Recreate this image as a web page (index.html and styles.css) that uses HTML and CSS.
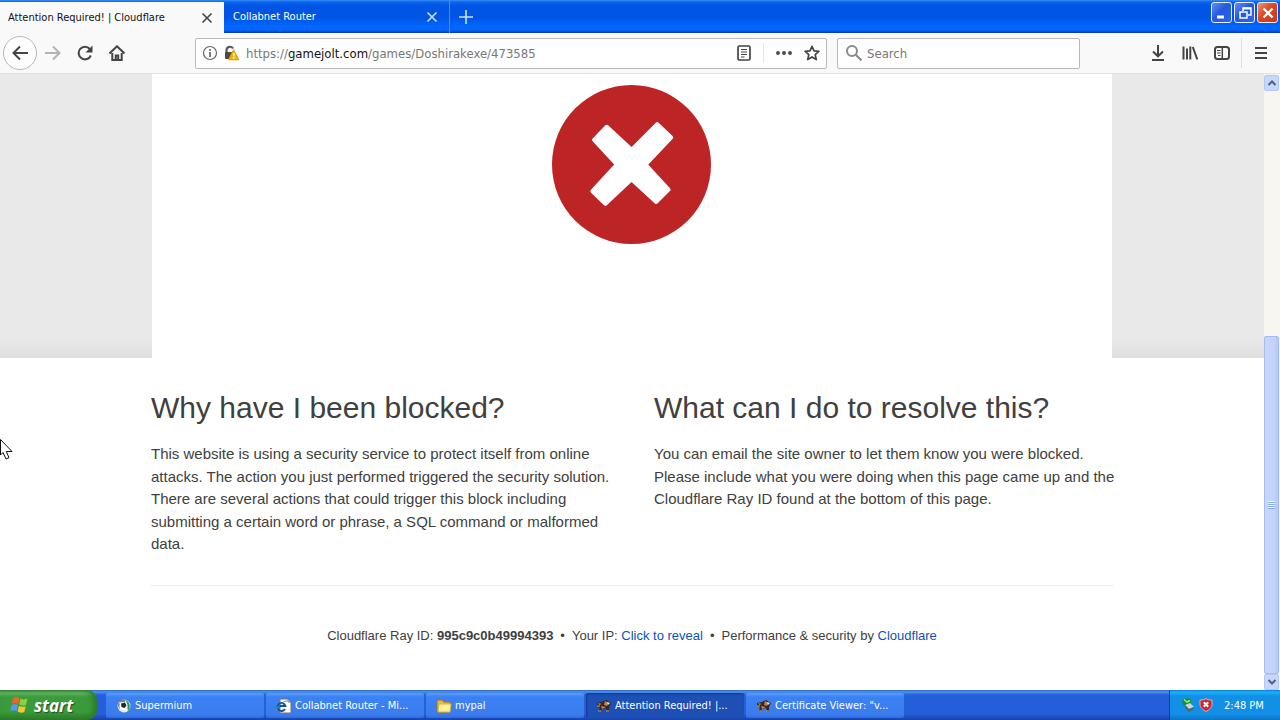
FILE: index.html
```html
<!DOCTYPE html>
<html lang="en">
<head>
<meta charset="utf-8">
<title>Attention Required! | Cloudflare</title>
<link rel="stylesheet" href="styles.css">
</head>
<body>
<header class="tabbar">
  <div class="tab tab-active">
    <button class="tab-title" type="button">Attention Required! | Cloudflare</button>
    <button class="tab-close" type="button" aria-label="Close tab"><svg width="12" height="12" viewBox="0 0 12 12"><path d="M1.500 1.500l9 9M10.500 1.500l-9 9"/></svg></button>
  </div>
  <div class="tab">
    <button class="tab-title" type="button">Collabnet Router</button>
    <button class="tab-close" type="button" aria-label="Close tab"><svg width="12" height="12" viewBox="0 0 12 12"><path d="M1.500 1.500l9 9M10.500 1.500l-9 9"/></svg></button>
  </div>
  <button class="new-tab" type="button" aria-label="New tab"><svg width="14" height="14" viewBox="0 0 14 14"><path d="M7 0v14M0 7h14"/></svg></button>
  <div class="window-controls">
    <button class="win-btn" type="button" aria-label="Minimize"><svg width="18" height="18" viewBox="0 0 18 18"><path d="M4 13h7" stroke-width="3"/></svg></button>
    <button class="win-btn" type="button" aria-label="Restore"><svg width="18" height="18" viewBox="0 0 18 18"><path d="M7 7V4h8v7h-3" stroke-width="1.500"/><path d="M7 4.500h8" stroke-width="2"/><path d="M4 8h7v6H4z" stroke-width="1.500"/></svg></button>
    <button class="win-btn win-close" type="button" aria-label="Close"><svg width="18" height="18" viewBox="0 0 18 18"><path d="M4.500 4.500l9 9M13.500 4.500l-9 9" stroke-width="2.400"/></svg></button>
  </div>
</header>

<nav class="toolbar">
  <div class="nav-buttons">
    <button class="icon-btn back" type="button" aria-label="Back"><svg width="16" height="16" viewBox="0 0 16 16"><path d="M16 8H2M8 1.500L1.500 8 8 14.500"/></svg></button>
    <button class="icon-btn forward" type="button" aria-label="Forward"><svg width="16" height="16" viewBox="0 0 16 16"><path d="M0 8h14M8 1.500L14.500 8 8 14.500"/></svg></button>
    <button class="icon-btn" type="button" aria-label="Reload"><svg width="16" height="16" viewBox="0 0 16 16"><path d="M13.800 10.500A6.300 6.300 0 1 1 12.800 4"/><path d="M15.500 .5v7h-7z" class="solid"/></svg></button>
    <button class="icon-btn" type="button" aria-label="Home"><svg width="16" height="16" viewBox="0 0 16 16"><path d="M.5 8.500L8 1.300l7.500 7.200M3.300 8v7h9.400V8"/><path d="M6.800 15v-4.500h2.400V15"/></svg></button>
  </div>
  <div class="field url-field">
    <svg width="16" height="16" viewBox="0 0 16 16" class="thin"><circle cx="8" cy="8" r="6.500"/><path d="M8 7v5M8 4v1.700" stroke-width="1.700"/></svg>
    <svg width="16" height="16" viewBox="0 0 16 16"><path d="M3.500 8V5a3.500 3.500 0 0 1 6.500-1.500" stroke="#595959" stroke-width="2.200"/><rect x="2" y="7" width="9" height="7" rx="1" fill="#4a4a4a" stroke="none"/><path d="M10.500 5L6 14.500h9.500z" fill="#f5b50f" stroke="#e5a500" stroke-linejoin="round" stroke-width="1.400"/><path d="M10.800 8v3.300M10.800 12.300v1.400" stroke="#fff" stroke-width="1.400"/></svg>
    <div class="url" role="textbox" aria-label="Address" contenteditable="true" spellcheck="false">https://<span class="host">gamejolt.com</span>/games/Doshirakexe/473585</div>
    <button class="field-btn" type="button" aria-label="Reader view"><svg width="16" height="16" viewBox="0 0 16 16"><rect x="2" y="1" width="12" height="14" rx="1.500" stroke-width="1.700"/><path d="M5 4.500h6M5 7h6M5 9.500h6M5 12h3.500" stroke-width="1"/></svg></button>
    <span class="field-sep"></span>
    <button class="field-btn" type="button" aria-label="Page actions"><svg width="16" height="16" viewBox="0 0 16 16"><g fill="#505050" stroke="none"><circle cx="2" cy="8" r="2"/><circle cx="8" cy="8" r="2"/><circle cx="14" cy="8" r="2"/></g></svg></button>
    <button class="field-btn" type="button" aria-label="Bookmark"><svg width="16" height="16" viewBox="0 0 16 16"><path d="M8 1.300l2 4.600 4.900.4-3.700 3.300 1.100 5L8 12l-4.300 2.600 1.100-5L1.100 6.300 6 5.900z" stroke-width="1.700" stroke-linejoin="round"/></svg></button>
  </div>
  <label class="field search-field">
    <svg width="16" height="16" viewBox="0 0 16 16"><g stroke="#8a8a8a"><circle cx="6" cy="6" r="5"/><path d="M9.800 9.800L15.500 15.500"/></g></svg>
    <input class="search" type="text" placeholder="Search" aria-label="Search">
  </label>
  <div class="tools">
    <button class="icon-btn" type="button" aria-label="Downloads"><svg width="16" height="16" viewBox="0 0 16 16"><path d="M8 0v11M3 6.500L8 11.300l5-4.800M2 15h12"/></svg></button>
    <button class="icon-btn" type="button" aria-label="Library"><svg width="16" height="16" viewBox="0 0 16 16"><path d="M1.500 1.500v13M5 3.500v11M8.300 1.500v13M10.800 2L15.300 14.500"/></svg></button>
    <button class="icon-btn" type="button" aria-label="Sidebars"><svg width="16" height="16" viewBox="0 0 16 16"><rect x="1" y="2" width="14" height="12" rx="2.500"/><path d="M8.300 2v12" stroke-width="1.500"/><path d="M3 5.500h3.500M3 8h3.500M4 10.500h2.500" stroke-width="1"/></svg></button>
    <span class="tool-sep"></span>
    <button class="icon-btn menu" type="button" aria-label="Menu"><svg width="16" height="16" viewBox="0 0 16 16"><path d="M2 3h12M2 8h12M2 13h12"/></svg></button>
  </div>
</nav>

<div class="viewport">
  <main class="page">
    <section class="banner">
      <div class="banner-card">
        <svg class="error-icon" viewBox="36 30 476 476" role="img" aria-label="Blocked"><circle cx="274" cy="268" r="238" fill="#bd2426"/><path d="M200 155L274 224 351 147 393 187 316 268 385 343 348 380 274 312 196 386 157 348 230 268 162 194z" fill="#fff" stroke="#fff" stroke-width="12" stroke-linejoin="round"/></svg>
      </div>
    </section>
    <div class="container">
      <div class="columns">
        <section>
          <h2>Why have I been blocked?</h2>
          <p>This website is using a security service to protect itself from online attacks. The action you just performed triggered the security solution. There are several actions that could trigger this block including submitting a certain word or phrase, a SQL command or malformed data.</p>
        </section>
        <section>
          <h2>What can I do to resolve this?</h2>
          <p>You can email the site owner to let them know you were blocked. Please include what you were doing when this page came up and the Cloudflare Ray ID found at the bottom of this page.</p>
        </section>
      </div>
      <footer class="footer">
        <span>Cloudflare Ray ID: <strong>995c9c0b49994393</strong></span><span class="dot">•</span><span>Your IP: <a href="#reveal">Click to reveal</a></span><span class="dot">•</span><span>Performance &amp; security by <a href="#cloudflare">Cloudflare</a></span>
      </footer>
    </div>
  </main>
  <div class="scrollbar">
    <button class="scroll-btn" type="button" aria-label="Scroll up"><svg width="10" height="8" viewBox="0 0 10 8"><path d="M1.500 6L5 2.500 8.500 6"/></svg></button>
    <div class="scroll-track"><div class="scroll-thumb"><span class="grip"></span></div></div>
    <button class="scroll-btn" type="button" aria-label="Scroll down"><svg width="10" height="8" viewBox="0 0 10 8"><path d="M1.500 2L5 5.500 8.500 2"/></svg></button>
  </div>
</div>

<footer class="taskbar">
  <button class="start" type="button">
    <svg width="20" height="20" viewBox="0 0 20 20"><path d="M3 3c2-1 4-1.500 6.500 0L8.200 9C6 7.600 4 8 1.700 9z" fill="#f0622d"/><path d="M10.500 3.600c2.500 1.200 4.500 1 7 0L16 10c-2.500 1-4.500.8-6.800-.5z" fill="#8ccf3f"/><path d="M1.500 10.200c2.300-1 4.300-1.200 6.500 0L6.700 16c-2.200-1.200-4.300-1-6.500 0z" fill="#5b95f5"/><path d="M9 10.800c2.300 1.200 4.300 1.300 6.700.4L14.300 17c-2.500 1-4.500.8-6.700-.4z" fill="#fbc62d"/></svg>
    <span>start</span>
  </button>
  <div class="tasks">
    <button class="task" type="button"><svg width="16" height="16" viewBox="0 0 16 16"><circle cx="8" cy="8" r="6.500" fill="#e8edf0"/><path d="M2 4a7 7 0 0 1 8-2L8 5z" fill="#778494"/><path d="M10 2a7 7 0 0 1 2 11L11 7z" fill="#2f9a4c"/><path d="M2 4l4 4-2 3A7 7 0 0 1 2 4z" fill="#7d8a97"/><circle cx="7.500" cy="8" r="4" fill="#fff"/><path d="M5 5.500l4-1 1.500 3-2 2.500-3-1z" fill="#1c2634"/></svg><span>Supermium</span></button>
    <button class="task" type="button"><svg width="16" height="16" viewBox="0 0 16 16"><path d="M4 1h8l3 3v11H4z" fill="#fff" stroke="#786f70"/><path d="M12 1v3h3" fill="none" stroke="#786f70"/><path d="M9 11a4 4 0 1 1 .4-3H3" fill="none" stroke="#154f98" stroke-width="1.900"/><path d="M1 13C-1 10 7 3 11 3" fill="none" stroke="#4193db"/></svg><span>Collabnet Router - Mi...</span></button>
    <button class="task" type="button"><svg width="16" height="16" viewBox="0 0 16 16"><path d="M1 3l1-1h4l2 2h6v10H2l-1-1z" fill="#e6b83f" stroke="#9d7924"/><path d="M3 6h12l-1 8H2z" fill="#fff09b" stroke="#d7b447"/></svg><span>mypal</span></button>
    <button class="task task-active" type="button"><svg width="16" height="16" viewBox="0 0 16 16"><path d="M1 5l5-1 4-2 3 2 2 1-2 4v5h-2l-1-4-4 1-2 3H2l2-4-3-2z" fill="#39251d"/><path d="M2 5l4 1-3 1zM9 3l4 2-2 3-3-1zM5 8l5 1-4 2z" fill="#b98554"/><path d="M11 4l3 1-2 2z" fill="#eee4d5"/><path d="M2 13h3M10 13h3M1 8h3" stroke="#c8ad88"/></svg><span>Attention Required! |...</span></button>
    <button class="task" type="button"><svg width="16" height="16" viewBox="0 0 16 16"><path d="M1 5l5-1 4-2 3 2 2 1-2 4v5h-2l-1-4-4 1-2 3H2l2-4-3-2z" fill="#39251d"/><path d="M2 5l4 1-3 1zM9 3l4 2-2 3-3-1zM5 8l5 1-4 2z" fill="#b98554"/><path d="M11 4l3 1-2 2z" fill="#eee4d5"/><path d="M2 13h3M10 13h3M1 8h3" stroke="#c8ad88"/></svg><span>Certificate Viewer: "v...</span></button>
  </div>
  <div class="tray">
    <svg width="14" height="14" viewBox="0 0 14 14"><path d="M1 2l5-2 4 1v5l-5 3-3-2z" fill="#1d8d3b"/><path d="M3 1.500l3 2.500 3-1.500" fill="none" stroke="#91ed75" stroke-width="1.500"/><path d="M4 7l5-2 4 4-5 2z" fill="#c9d8d2"/><path d="M4 7l4 4 5-2v2l-5 3-4-4z" fill="#56616c"/></svg>
    <svg width="14" height="14" viewBox="0 0 14 14"><path d="M7 .5l2 1.200 4 .5v4c0 3.600-3 5.600-6 7.300-3-1.700-6-3.700-6-7.300v-4l4-.5z" fill="#c9252a" stroke="#f3a9a6"/><path d="M4.800 4.300l4.400 4.400M9.200 4.300L4.800 8.700" stroke="#fff" stroke-width="2"/></svg>
    <time>2:48 PM</time>
  </div>
</footer>

<svg class="cursor" width="14" height="22" viewBox="0 0 14 22" aria-hidden="true"><path d="M.5 .5v15.500l2.500-2.500 3 6.500 3-1.300L6.300 12.500H12z" fill="#fff" stroke="#111"/></svg>
</body>
</html>
```
FILE: styles.css
```css
* { box-sizing: border-box; }
body {
  margin: 0;
  min-height: 100vh;
  display: flex;
  flex-direction: column;
  position: relative;
  overflow-x: hidden;
  background: #fff;
  font-family: "DejaVu Sans Condensed", "Noto Sans", sans-serif;
  font-size: 11px;
  color: #111;
}
button { font: inherit; color: inherit; border: 0; padding: 0; background: none; }
svg { display: block; flex: none; }

/* Tab strip */
.tabbar {
  display: flex;
  height: 33px;
  background: linear-gradient(#3a8cf8 0, #0866ee 2px, #0054e3 6px, #0055e5 18px, #0366fd 26px, #0366fd 30px, #0038a9 33px);
}
.tab {
  display: flex;
  align-items: center;
  justify-content: space-between;
  width: 226px;
  padding: 0 11px 0 9px;
  color: #fff;
  border-right: 1px solid #4b91f4;
  text-shadow: 0 0 1px #fff;
}
.tab-active {
  width: 224px;
  padding-left: 8px;
  margin-top: 2px;
  background: #f9f9fa;
  color: #111;
  border: 0;
  text-shadow: none;
}
.tab-close svg, .new-tab svg { fill: none; stroke: #cfe0fc; stroke-width: 1.6; }
.tab-active .tab-close svg { stroke: #444; }
.new-tab { padding: 0 9px; }
.window-controls { display: flex; gap: 2px; margin-left: auto; padding: 2px 2px 0 0; }
.win-btn {
  display: grid;
  place-items: center;
  width: 21px;
  height: 21px;
  border: 1px solid #e6eefc;
  border-radius: 3px;
  background: linear-gradient(135deg, #668ff2, #2459dc 45%, #2a67ef);
}
.win-close { background: linear-gradient(135deg, #ee9273, #dc4622 45%, #c93a15); }
.win-btn svg { fill: none; stroke: #fff; }

/* Navigation toolbar */
.toolbar {
  display: flex;
  align-items: center;
  height: 41px;
  padding: 0 3px;
  background: #f9f9fa;
  border-bottom: 1px solid #e2e2e3;
}
.toolbar svg { fill: none; stroke: #444; stroke-width: 2; }
.toolbar .solid { fill: #444; stroke: none; }
.toolbar .thin { stroke: #666; stroke-width: 1.2; }
.icon-btn { display: grid; place-items: center; width: 32px; height: 34px; }
.nav-buttons { display: flex; width: 192px; }
.nav-buttons .back { width: 34px; border: 1px solid #b8b8b8; border-radius: 50%; background: #fdfdfd; }
.toolbar .forward svg { stroke: #b4b4b4; }
.field {
  display: flex;
  align-items: center;
  height: 31px;
  background: #fff;
  border: 1px solid #bcb8be;
  border-radius: 2px;
}
.url-field { flex: 1; min-width: 0; gap: 5px; padding: 0 6px; }
.url { flex: 1; min-width: 0; padding-left: 2px; overflow: hidden; white-space: nowrap; font-size: 13px; color: #777; outline: 0; }
.host { color: #111; }
.field-btn { margin-left: 7px; }
.field-sep { width: 1px; height: 20px; margin-left: 6px; background: #e6e6e6; }
.search-field { flex: 0 1 243px; gap: 5px; margin-left: 10px; padding: 0 8px; }
.search { flex: 1; min-width: 0; border: 0; padding: 0; background: none; font: inherit; font-size: 13px; outline: 0; }
.search::placeholder { color: #777; opacity: 1; }
.tools { display: flex; align-items: center; margin-left: 62px; }
.tool-sep { width: 1px; height: 30px; margin: 0 3px; background: #dedede; }
.tools .menu svg { stroke-width: 1.8; }

/* Page */
.viewport { flex: 1; display: flex; }
.page { flex: 1; min-width: 0; font-family: "Liberation Sans", Arial, sans-serif; color: #404040; }
.banner { background: linear-gradient(to top, #dedede 0, #e3e3e3 8px, #e9e9e9 18px); }
.banner-card { max-width: 960px; margin: 0 auto; padding: 11px 2px 114px 0; background: #fff; }
.error-icon { width: 159px; height: 159px; margin: 0 auto; }
.container { max-width: 962px; margin: 0 auto; padding-top: 31px; }
.columns { display: grid; grid-template-columns: 1fr 1fr; gap: 44px; padding-bottom: 29px; border-bottom: 1px solid #ebebeb; }
h2 { margin: 0; font-size: 30px; line-height: 38px; font-weight: 400; }
p { margin: 16px -8px 0 0; font-size: 15px; line-height: 1.5; }
.footer { padding: 40px 0; text-align: center; font-size: 13px; line-height: 20px; }
.dot { margin: 0 7px; }
a { color: #0a51c0; text-decoration: none; }

/* Scrollbar */
.scrollbar { display: flex; flex-direction: column; width: 16px; padding: 1px 1px 0 0; background: #f7f6f1; }
.scroll-btn { display: grid; place-items: center; height: 16px; border: 1px solid #b4c8f6; border-radius: 2px; background: #c8d6fb; }
.scroll-btn svg { fill: none; stroke: #4d6185; stroke-width: 2; }
.scroll-track { flex: 1; display: flex; flex-direction: column; justify-content: flex-end; }
.scroll-thumb {
  height: 58%;
  display: grid;
  place-items: center;
  border: 1px solid #a4bcf0;
  border-radius: 2px;
  background: linear-gradient(to right, #c9d7fc, #c3d3fd 70%, #b3c7f6);
}
.grip { width: 7px; height: 8px; background: repeating-linear-gradient(#eef4fe 0 1px, #8cb0f8 1px 2px); }

/* Taskbar */
.taskbar {
  display: flex;
  height: 30px;
  color: #fff;
  background: linear-gradient(#3168d5 0, #4993e6 2px, #245edb 5px, #245edb 24px, #1941a5 30px);
}
.start {
  display: flex;
  align-items: center;
  gap: 4px;
  width: 97px;
  padding-left: 10px;
  border-radius: 0 10px 10px 0;
  background: linear-gradient(#3a8a3a 0, #62b562 3px, #3c9a3c 7px, #379b37 22px, #2c792c 30px);
  box-shadow: inset -4px 0 5px #2b7a2b;
  font-family: "Open Sans", sans-serif;
  font-size: 17px;
  font-style: italic;
  font-weight: 700;
  text-shadow: 1px 1px 1px #244f24;
}
.tasks { display: flex; flex: 1; min-width: 0; gap: 2px; padding: 3px 0 2px 9px; }
.task {
  flex: 0 1 158px;
  min-width: 0;
  display: flex;
  align-items: center;
  gap: 3px;
  padding-left: 10px;
  border-radius: 2px;
  white-space: nowrap;
  background: linear-gradient(#5c9bf8 0, #3c81f3 4px, #3a7cee 22px, #2f6ad8);
}
.task-active { background: #1e4fb5; box-shadow: inset 1px 1px 2px #123a8c; }
.tray {
  display: flex;
  align-items: center;
  gap: 4px;
  width: 111px;
  padding-left: 11px;
  border-left: 1px solid #0a3f9b;
  background: linear-gradient(#0c7ad8 0, #1cb0f3 2px, #1290e8 6px, #1290e8 24px, #0d72c5);
}
.tray time { margin-left: 7px; }

.cursor { position: absolute; left: 0; top: 439px; }
```
